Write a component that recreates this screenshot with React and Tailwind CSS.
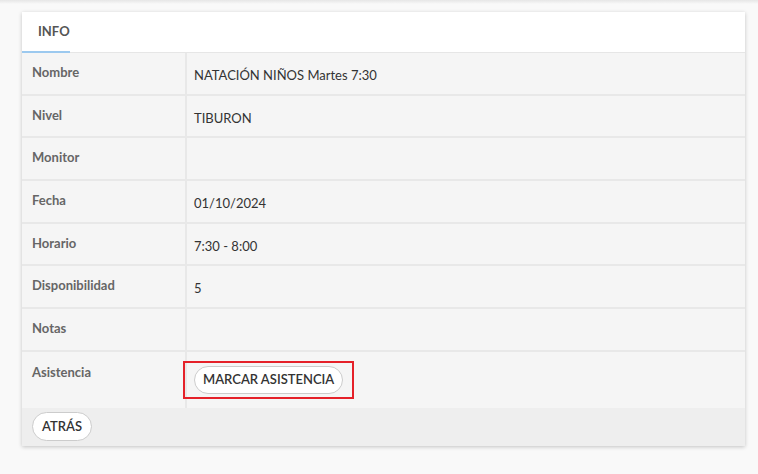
import React from 'react';

const rows = [
  { label: 'Nombre', value: 'NATACIÓN NIÑOS Martes 7:30' },
  { label: 'Nivel', value: 'TIBURON' },
  { label: 'Monitor', value: '' },
  { label: 'Fecha', value: '01/10/2024' },
  { label: 'Horario', value: '7:30 - 8:00' },
  { label: 'Disponibilidad', value: '5' },
  { label: 'Notas', value: '' },
];

const font = { fontFamily: 'Lato, "Open Sans", sans-serif' };

export default function App() {
  return (
    <div className="min-h-[474px] w-[758px] bg-[#f9f9f9] text-[13px]" style={font}>
      <div className="h-[4px] bg-gradient-to-b from-[#e6e6e6] to-[#f9f9f9]" />
      <div className="pl-[22px] pr-[13px] pt-[8px]">
        <div className="bg-white shadow-[0_1px_4px_rgba(0,0,0,0.22)]">
          {/* Tabs */}
          <div className="h-[41px] border-b border-[#e6e6e6] flex items-end">
            <div className="w-[48px] h-[41px] flex items-center pl-[16px] border-b-2 border-[#9cc9ef] -mb-px">
              <span className="font-bold text-[#555] text-[13px]">INFO</span>
            </div>
          </div>

          {/* Info table */}
          <div className="bg-[#f5f5f5]">
            {rows.map((r) => (
              <div key={r.label} className="flex h-[42.7px] border-b-2 border-[#e8e8e8]">
                <div className="w-[165px] shrink-0 border-r-2 border-[#e8e8e8] pl-[10px] pt-[10px] font-bold text-[#666]">
                  {r.label}
                </div>
                <div className="pl-[7px] pt-[13px] text-[#333]">{r.value}</div>
              </div>
            ))}
            <div className="flex h-[56px]">
              <div className="w-[165px] shrink-0 border-r-2 border-[#e8e8e8] pl-[10px] pt-[11px] font-bold text-[#666]">
                Asistencia
              </div>
              <div className="pt-[9px]">
                <div className="-ml-[4px] border-2 border-[#e52129] px-[9px] py-[3px]">
                  <button className="h-[28px] px-[8px] rounded-full bg-white border border-[#cccccc] text-[#333] font-semibold text-[13px]">
                    MARCAR ASISTENCIA
                  </button>
                </div>
              </div>
            </div>
          </div>

          {/* Footer */}
          <div className="bg-[#eeeeee] h-[38px] flex items-center pl-[10px]">
            <button className="h-[29px] px-[9px] rounded-full bg-white border border-[#cccccc] text-[#333] font-semibold text-[13px]">
              ATRÁS
            </button>
          </div>
        </div>
      </div>
    </div>
  );
}
